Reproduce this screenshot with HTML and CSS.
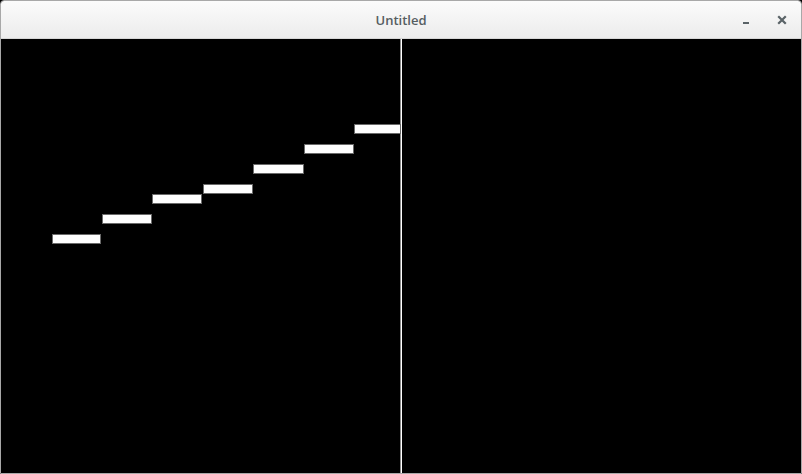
FILE: index.html
```html
<!DOCTYPE html>
<html>
<head>
<meta charset="utf-8">
<link rel="stylesheet" href="styles.css">
</head>
<body>
<div class="window">
  <div class="titlebar">
    <div class="title">Untitled</div>
    <div class="controls">
      <svg class="btn-min" width="8" height="8" viewBox="0 0 8 8"><rect x="1" y="5" width="6" height="2" fill="#5a6367"/></svg>
      <svg class="btn-close" width="10" height="10" viewBox="0 0 10 10"><path d="M2 2 L8 8 M8 2 L2 8" stroke="#5a6367" stroke-width="2.2" stroke-linecap="square"/></svg>
    </div>
  </div>
  <div class="canvas">
    <div class="pane left">
      <div class="note" style="left:51px;top:195px;width:49px"></div>
      <div class="note" style="left:101px;top:175px;width:50px"></div>
      <div class="note" style="left:151px;top:155px;width:50px"></div>
      <div class="note" style="left:202px;top:145px;width:50px"></div>
      <div class="note" style="left:252px;top:125px;width:51px"></div>
      <div class="note" style="left:303px;top:105px;width:50px"></div>
      <div class="note" style="left:353px;top:85px;width:47px"></div>
    </div>
    <div class="playhead"></div>
    <div class="pane right"></div>
  </div>
</div>
</body>
</html>
```

FILE: styles.css
```css
html, body {
  margin: 0;
  padding: 0;
  background: #000;
}
.window {
  width: 802px;
  height: 474px;
  box-sizing: border-box;
  border: 1px solid #a8a8a8;
  border-radius: 4px 4px 0 0;
  display: flex;
  flex-direction: column;
  overflow: hidden;
  background: #000;
}
.titlebar {
  height: 37px;
  flex: none;
  background: linear-gradient(#fbfbfb, #ececec);
  border-bottom: 1px solid #d6d6d6;
  position: relative;
  display: flex;
  align-items: center;
  justify-content: center;
}
.title {
  font-family: "Open Sans", "Noto Sans", sans-serif;
  font-weight: 600;
  font-size: 13px;
  color: #555d61;
  margin-top: 1px;
}
.controls {
  position: absolute;
  right: 14px;
  top: 13px;
  display: flex;
  align-items: center;
  gap: 27px;
}
.btn-min { margin-top: 3px; }
.canvas {
  flex: 1;
  display: flex;
  background: #000;
}
.pane {
  position: relative;
  height: 100%;
}
.left { width: 399px; }
.right { flex: 1; }
.playhead {
  width: 1px;
  background: #fff;
  border-left: 1px solid #8a8a8a;
}
.note {
  position: absolute;
  height: 10px;
  box-sizing: border-box;
  background: #fff;
  border: 1px solid #6a6a6a;
}
```
